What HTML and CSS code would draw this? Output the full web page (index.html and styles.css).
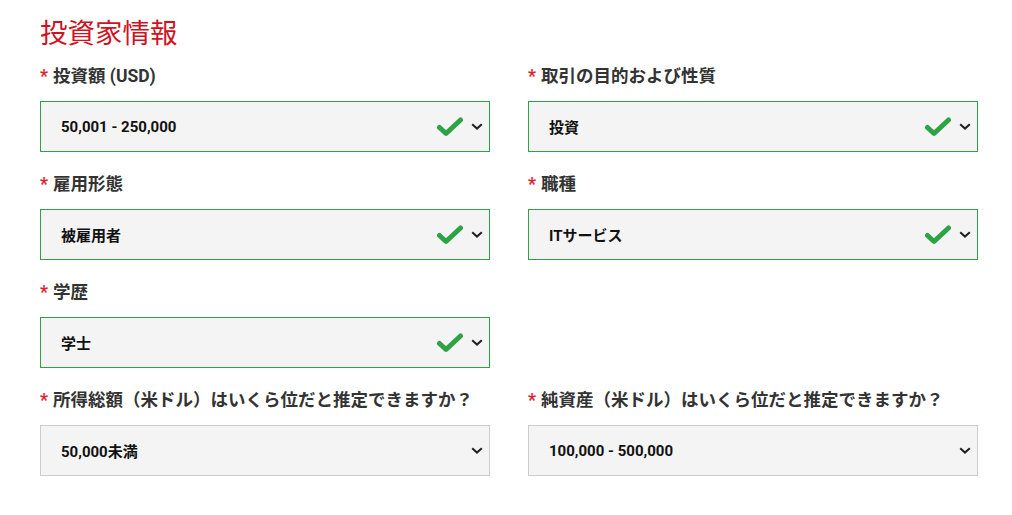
FILE: index.html
```html
<!DOCTYPE html>
<html lang="ja">
<head>
  <meta charset="UTF-8">
  <meta name="viewport" content="width=device-width, initial-scale=1.0">
  <title>投資家情報</title>
  <link rel="stylesheet" href="styles.css">
</head>
<body>
  <h2 class="form-title">投資家情報</h2>

  <div class="form-grid">
    <!-- Investment amount -->
    <div class="field">
      <label class="field-label"><span class="req">*</span>投資額 (USD)</label>
      <div class="select valid">
        <span class="select-value">50,001 - 250,000</span>
        <svg class="check" viewBox="0 0 26 20"><path d="M2.5 10.5 L9 16.5 L23.5 3" fill="none" stroke="#2ea346" stroke-width="5" stroke-linecap="round" stroke-linejoin="round"/></svg>
        <svg class="chevron" viewBox="0 0 12 7"><path d="M1.2 1.2 L6 5.6 L10.8 1.2" fill="none" stroke="#222" stroke-width="2"/></svg>
      </div>
    </div>

    <!-- Purpose -->
    <div class="field">
      <label class="field-label"><span class="req">*</span>取引の目的および性質</label>
      <div class="select valid">
        <span class="select-value">投資</span>
        <svg class="check" viewBox="0 0 26 20"><path d="M2.5 10.5 L9 16.5 L23.5 3" fill="none" stroke="#2ea346" stroke-width="5" stroke-linecap="round" stroke-linejoin="round"/></svg>
        <svg class="chevron" viewBox="0 0 12 7"><path d="M1.2 1.2 L6 5.6 L10.8 1.2" fill="none" stroke="#222" stroke-width="2"/></svg>
      </div>
    </div>

    <!-- Employment -->
    <div class="field">
      <label class="field-label"><span class="req">*</span>雇用形態</label>
      <div class="select valid">
        <span class="select-value">被雇用者</span>
        <svg class="check" viewBox="0 0 26 20"><path d="M2.5 10.5 L9 16.5 L23.5 3" fill="none" stroke="#2ea346" stroke-width="5" stroke-linecap="round" stroke-linejoin="round"/></svg>
        <svg class="chevron" viewBox="0 0 12 7"><path d="M1.2 1.2 L6 5.6 L10.8 1.2" fill="none" stroke="#222" stroke-width="2"/></svg>
      </div>
    </div>

    <!-- Occupation -->
    <div class="field">
      <label class="field-label"><span class="req">*</span>職種</label>
      <div class="select valid">
        <span class="select-value">ITサービス</span>
        <svg class="check" viewBox="0 0 26 20"><path d="M2.5 10.5 L9 16.5 L23.5 3" fill="none" stroke="#2ea346" stroke-width="5" stroke-linecap="round" stroke-linejoin="round"/></svg>
        <svg class="chevron" viewBox="0 0 12 7"><path d="M1.2 1.2 L6 5.6 L10.8 1.2" fill="none" stroke="#222" stroke-width="2"/></svg>
      </div>
    </div>

    <!-- Education -->
    <div class="field">
      <label class="field-label"><span class="req">*</span>学歴</label>
      <div class="select valid">
        <span class="select-value">学士</span>
        <svg class="check" viewBox="0 0 26 20"><path d="M2.5 10.5 L9 16.5 L23.5 3" fill="none" stroke="#2ea346" stroke-width="5" stroke-linecap="round" stroke-linejoin="round"/></svg>
        <svg class="chevron" viewBox="0 0 12 7"><path d="M1.2 1.2 L6 5.6 L10.8 1.2" fill="none" stroke="#222" stroke-width="2"/></svg>
      </div>
    </div>
    <div class="field empty"></div>

    <!-- Income -->
    <div class="field">
      <label class="field-label"><span class="req">*</span>所得総額（米ドル）はいくら位だと推定できますか？</label>
      <div class="select">
        <span class="select-value">50,000未満</span>
        <svg class="chevron" viewBox="0 0 12 7"><path d="M1.2 1.2 L6 5.6 L10.8 1.2" fill="none" stroke="#222" stroke-width="2"/></svg>
      </div>
    </div>

    <!-- Net worth -->
    <div class="field">
      <label class="field-label"><span class="req">*</span>純資産（米ドル）はいくら位だと推定できますか？</label>
      <div class="select">
        <span class="select-value">100,000 - 500,000</span>
        <svg class="chevron" viewBox="0 0 12 7"><path d="M1.2 1.2 L6 5.6 L10.8 1.2" fill="none" stroke="#222" stroke-width="2"/></svg>
      </div>
    </div>
  </div>
</body>
</html>
```

FILE: styles.css
```css
/* General */
body {
  font-family: Roboto, "Noto Sans CJK JP", sans-serif;
  margin: 0;
  padding: 18px 40px 0;
  background: #fff;
  color: #333;
}

/* Title */
.form-title {
  font-size: 27.5px;
  font-weight: normal;
  line-height: 32px;
  margin: 0 0 14px;
  color: #d0121f;
}

/* Grid */
.form-grid {
  display: grid;
  grid-template-columns: 450px 450px;
  column-gap: 38px;
  row-gap: 20px;
}

.field {
  display: flex;
  flex-direction: column;
}

.field-label {
  font-size: 17.5px;
  font-weight: bold;
  line-height: 24px;
  height: 24px;
  margin-bottom: 13px;
  color: #333;
}

.req {
  color: #e0202e;
  margin-right: 5px;
}

/* Select boxes */
.select {
  height: 51px;
  box-sizing: border-box;
  display: flex;
  align-items: center;
  padding: 0 6px 0 20px;
  background: #f4f4f4;
  border: 1px solid #ccc;
}

.select.valid {
  border-color: #2ea346;
}

.select-value {
  flex: 1;
  font-size: 15px;
  font-weight: bold;
  color: #111;
}

.check {
  width: 26px;
  height: 20px;
  margin-right: 8px;
}

.chevron {
  width: 12px;
  height: 7px;
}
```
